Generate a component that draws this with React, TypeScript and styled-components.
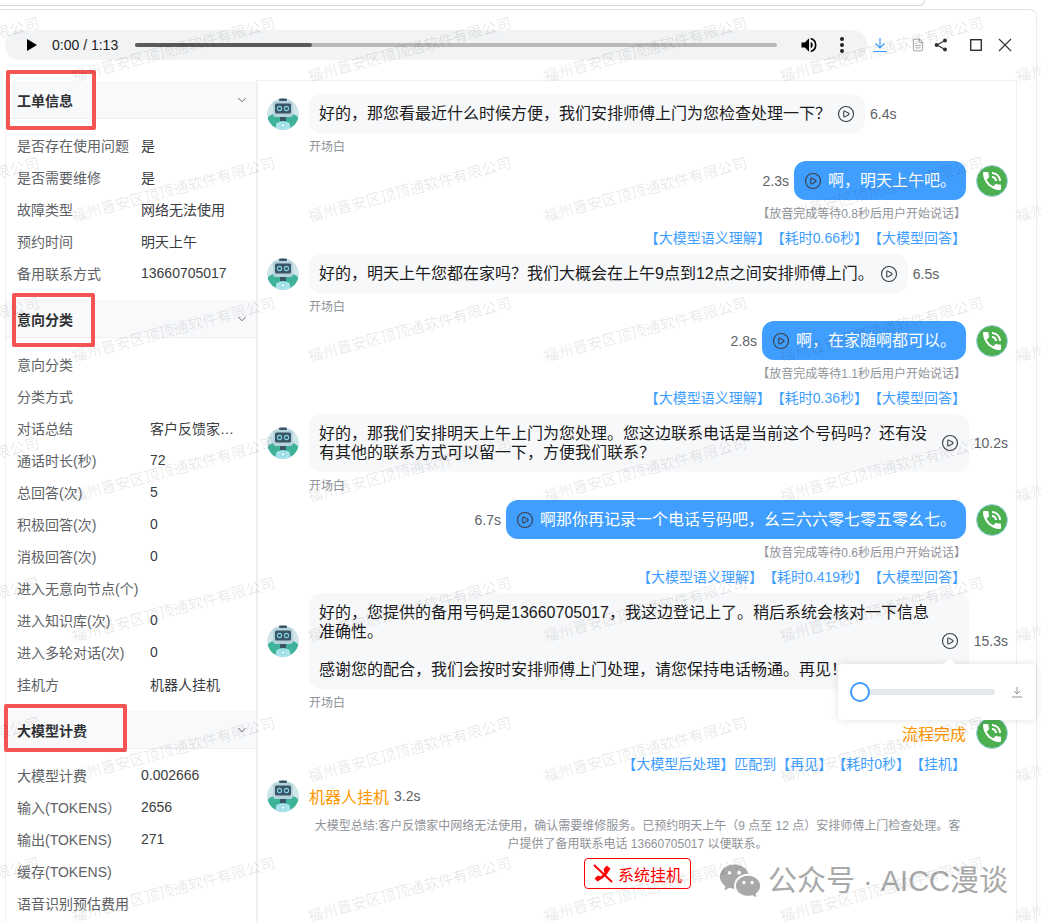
import React from "react";
import styled, { createGlobalStyle } from "styled-components";
import { ChevronDown, CirclePlay, FileText } from "lucide-react";
import { MdPhoneInTalk } from "react-icons/md";
import { RiWechatFill } from "react-icons/ri";

const GlobalStyle = createGlobalStyle`
    html, body {
        margin: 0;
        padding: 0;
        background: #fff;
    }
    body {
        font-family: "Liberation Sans", "Noto Sans CJK SC", sans-serif;
    }
    * {
        box-sizing: border-box;
    }
`;

type Field = { label: string; value?: string };

const ticketFields: Field[] = [
    { label: "是否存在使用问题", value: "是" },
    { label: "是否需要维修", value: "是" },
    { label: "故障类型", value: "网络无法使用" },
    { label: "预约时间", value: "明天上午" },
    { label: "备用联系方式", value: "13660705017" },
];

const intentFields: Field[] = [
    { label: "意向分类" },
    { label: "分类方式" },
    { label: "对话总结", value: "客户反馈家中网络无法使用" },
    { label: "通话时长(秒)", value: "72" },
    { label: "总回答(次)", value: "5" },
    { label: "积极回答(次)", value: "0" },
    { label: "消极回答(次)", value: "0" },
    { label: "进入无意向节点(个)" },
    { label: "进入知识库(次)", value: "0" },
    { label: "进入多轮对话(次)", value: "0" },
    { label: "挂机方", value: "机器人挂机" },
];

const billingFields: Field[] = [
    { label: "大模型计费", value: "0.002666" },
    { label: "输入(TOKENS）", value: "2656" },
    { label: "输出(TOKENS)", value: "271" },
    { label: "缓存(TOKENS)" },
    { label: "语音识别预估费用" },
];

const sections = [
    { title: "工单信息", labelWidth: 124, valueWidth: 100, fields: ticketFields },
    { title: "意向分类", labelWidth: 133, valueWidth: 84, fields: intentFields },
    { title: "大模型计费", labelWidth: 124, valueWidth: 100, fields: billingFields },
];

const Robot = () => (
    <AvatarBox>
        <svg width="32" height="32" viewBox="0 0 32 32">
            <circle cx="16" cy="16" r="16" fill="#cfe5ea" />
            <path d="M0.6 20 C3 16 8 15 16 15 C24 15 29 16 31.4 20 A16 16 0 0 1 0.6 20 Z" fill="#3fb39a" />
            <path d="M8 32 L9.5 25 Q16 21.5 22.5 25 L24 32 Z" fill="#a9e2ea" />
            <circle cx="16" cy="27.5" r="2" fill="#e6f8fa" stroke="#6fd0dc" strokeWidth="0.8" />
            <rect x="13" y="19" width="6" height="4" fill="#3b5566" />
            <rect x="12" y="0.5" width="8" height="2.5" rx="1" fill="#3b5566" />
            <rect x="6" y="3" width="20" height="16" rx="3" fill="#b4d2da" />
            <rect x="8" y="5.5" width="16" height="10" rx="1.5" fill="#3b5566" />
            <circle cx="12.5" cy="10.5" r="2.1" fill="none" stroke="#7fd2e0" strokeWidth="1.1" />
            <circle cx="19.5" cy="10.5" r="2.1" fill="none" stroke="#7fd2e0" strokeWidth="1.1" />
        </svg>
    </AvatarBox>
);

const Phone = () => (
    <PhoneBox>
        <MdPhoneInTalk size={24} color="#fff" />
    </PhoneBox>
);

const PlayIcon = () => (
    <PlayBox>
        <CirclePlay size={18} strokeWidth={1.5} color="#3a3f48" />
    </PlayBox>
);

const BotMessage = ({ text, time }: { text: string; time: string }) => (
    <Block>
        <Row>
            <Robot />
            <Bubble>
                <BubbleText>{text}</BubbleText>
                <PlayIcon />
            </Bubble>
            <Duration>{time}</Duration>
        </Row>
        <Caption>开场白</Caption>
    </Block>
);

const UserMessage = ({ text, time, note, links }: { text: string; time: string; note: string; links: string[] }) => (
    <Block>
        <RightRow>
            <UserDuration>{time}</UserDuration>
            <UserBubble>
                <PlayIcon />
                {text}
            </UserBubble>
            <Phone />
        </RightRow>
        <Note>{note}</Note>
        <Links>
            {links.map((link) => (
                <span key={link}>{link}</span>
            ))}
        </Links>
    </Block>
);

const App = () => {
    const marks = Array.from({ length: 42 }, (_, i) => i);

    return (
        <Page>
            <GlobalStyle />
            <TopStrip />
            <Window>
                <Toolbar>
                    <AudioBar>
                        <svg width="12" height="14" viewBox="0 0 12 14">
                            <path d="M1 1 L11 7 L1 13 Z" fill="#000" />
                        </svg>
                        <AudioTime>0:00 / 1:13</AudioTime>
                        <Track>
                            <Played />
                        </Track>
                        <svg width="20" height="20" viewBox="0 0 24 24">
                            <path d="M3 9v6h4l5 5V4L7 9H3zm13.5 3A4.5 4.5 0 0 0 14 7.97v8.05c1.48-.73 2.5-2.25 2.5-4.02z" fill="#000" />
                            <path d="M14 3.23v2.06a7 7 0 0 1 0 13.42v2.06a9 9 0 0 0 0-17.54z" fill="#000" />
                        </svg>
                        <Dots>
                            <i />
                            <i />
                            <i />
                        </Dots>
                    </AudioBar>
                    <ToolIcon $left={5}>
                        <svg width="16" height="16" viewBox="0 0 16 16">
                            <path d="M8 1 V11 M3.5 6.5 L8 11 L12.5 6.5 M1.5 14.5 H14.5" fill="none" stroke="#409eff" strokeWidth="1.2" />
                        </svg>
                    </ToolIcon>
                    <ToolIcon $left={23}>
                        <FileText size={14} strokeWidth={1} color="#606266" />
                    </ToolIcon>
                    <ToolIcon $left={9}>
                        <svg width="14" height="14" viewBox="0 0 14 14">
                            <path d="M3 7 L11 2.5 M3 7 L11 11.5" stroke="#303133" strokeWidth="1.2" />
                            <circle cx="2.6" cy="7" r="2" fill="#303133" />
                            <circle cx="11" cy="2.6" r="2" fill="#303133" />
                            <circle cx="11" cy="11.4" r="2" fill="#303133" />
                        </svg>
                    </ToolIcon>
                    <ToolIcon $left={21}>
                        <svg width="14" height="14" viewBox="0 0 14 14">
                            <rect x="1.7" y="1.7" width="10.6" height="10.6" fill="none" stroke="#303133" strokeWidth="1.4" />
                        </svg>
                    </ToolIcon>
                    <ToolIcon $left={15}>
                        <svg width="14" height="14" viewBox="0 0 14 14">
                            <path d="M1 1 L13 13 M13 1 L1 13" stroke="#303133" strokeWidth="1.1" />
                        </svg>
                    </ToolIcon>
                </Toolbar>
                <Main>
                    <Sidebar>
                        {sections.map((section) => (
                            <section key={section.title}>
                                <SectionHeader>
                                    <SectionTitle>{section.title}</SectionTitle>
                                    <ChevronDown size={14} strokeWidth={1.2} color="#303133" />
                                </SectionHeader>
                                <SectionBody>
                                    {section.fields.map((field) => (
                                        <FieldRow key={field.label} $labelWidth={section.labelWidth} $valueWidth={section.valueWidth}>
                                            <FieldLabel>{field.label}</FieldLabel>
                                            <FieldValue>{field.value}</FieldValue>
                                        </FieldRow>
                                    ))}
                                </SectionBody>
                            </section>
                        ))}
                    </Sidebar>
                    <Chat>
                        <BotMessage text="好的，那您看最近什么时候方便，我们安排师傅上门为您检查处理一下？" time="6.4s" />
                        <UserMessage
                            text="啊，明天上午吧。"
                            time="2.3s"
                            note="【放音完成等待0.8秒后用户开始说话】"
                            links={["【大模型语义理解】", "【耗时0.66秒】", "【大模型回答】"]}
                        />
                        <BotMessage text="好的，明天上午您都在家吗？我们大概会在上午9点到12点之间安排师傅上门。" time="6.5s" />
                        <UserMessage
                            text="啊，在家随啊都可以。"
                            time="2.8s"
                            note="【放音完成等待1.1秒后用户开始说话】"
                            links={["【大模型语义理解】", "【耗时0.36秒】", "【大模型回答】"]}
                        />
                        <BotMessage
                            text="好的，那我们安排明天上午上门为您处理。您这边联系电话是当前这个号码吗？还有没有其他的联系方式可以留一下，方便我们联系？"
                            time="10.2s"
                        />
                        <UserMessage
                            text="啊那你再记录一个电话号码吧，幺三六六零七零五零幺七。"
                            time="6.7s"
                            note="【放音完成等待0.6秒后用户开始说话】"
                            links={["【大模型语义理解】", "【耗时0.419秒】", "【大模型回答】"]}
                        />
                        <BotMessage
                            text={"好的，您提供的备用号码是13660705017，我这边登记上了。稍后系统会核对一下信息准确性。\n\n感谢您的配合，我们会按时安排师傅上门处理，请您保持电话畅通。再见！"}
                            time="15.3s"
                        />
                        <Block>
                            <RightRow>
                                <FlowDone>流程完成</FlowDone>
                                <Phone />
                            </RightRow>
                            <Links $top={5}>
                                <span>【大模型后处理】匹配到【再见】</span>
                                <span>【耗时0秒】</span>
                                <span>【挂机】</span>
                            </Links>
                        </Block>
                        <Block>
                            <Row>
                                <Robot />
                                <Hangup>机器人挂机</Hangup>
                                <HangupTime>3.2s</HangupTime>
                            </Row>
                            <Summary>
                                大模型总结:客户反馈家中网络无法使用，确认需要维修服务。已预约明天上午（9 点至 12 点）安排师傅上门检查处理。客户提供了备用联系电话 13660705017 以便联系。
                            </Summary>
                            <HangupButton>
                                <svg width="20" height="19" viewBox="0 0 20 19">
                                    <path d="M13.5 1.5 L17.5 4.5 L15 8.5 C13.5 11 11.5 13 8.5 15 L4.5 17.5 L1.5 14.5 L5 11.5 L7.5 12.5 C9 11.5 10.5 10 11.5 8.5 L10.5 5.5 Z" fill="#f00" />
                                    <path d="M1 1 L19 18" stroke="#f00" strokeWidth="2" />
                                </svg>
                                系统挂机
                            </HangupButton>
                        </Block>
                    </Chat>
                </Main>
            </Window>

            <Popover>
                <SliderTrack>
                    <SliderThumb />
                </SliderTrack>
                <svg width="12" height="12" viewBox="0 0 12 12">
                    <path d="M6 1 V8 M3 5 L6 8 L9 5 M1 11 H11" fill="none" stroke="#909399" strokeWidth="1" />
                </svg>
            </Popover>

            <RedBox $x={6} $y={70} $w={90} $h={60} />
            <RedBox $x={12} $y={293} $w={83} $h={54} />
            <RedBox $x={4} $y={704} $w={123} $h={48} />

            <Account>
                <RiWechatFill size={44} />
                <span>公众号&nbsp;·&nbsp;AICC漫谈</span>
            </Account>

            <Watermark>
                {marks.map((i) => (
                    <Mark key={i}>
                        <span>福州晋安区顶顶通软件有限公司</span>
                    </Mark>
                ))}
            </Watermark>
        </Page>
    );
};

export default App;

// styled-component

const Page = styled.div`
    position: relative;
    width: 1041px;
    height: 923px;
    overflow: hidden;
    background: #fff;
    color: #303133;
`;

const TopStrip = styled.div`
    width: 925px;
    height: 6px;
    border-bottom: 1px solid #d6d6d6;
    border-right: 1px solid #d6d6d6;
    border-bottom-right-radius: 6px;
`;

const Window = styled.div`
    width: 1037px;
    height: 914px;
    margin-top: 3px;
    border-top: 1px solid #e2e2e2;
    border-right: 1px solid #ececec;
    border-top-right-radius: 8px;
`;

const Toolbar = styled.div`
    display: flex;
    align-items: center;
    height: 70px;
    padding-left: 5px;
`;

const AudioBar = styled.div`
    display: flex;
    align-items: center;
    width: 862px;
    height: 30px;
    padding-left: 21px;
    background: #f1f3f4;
    border-radius: 15px;
`;

const AudioTime = styled.span`
    margin-left: 14px;
    font-size: 14px;
    color: #222;
    white-space: nowrap;
`;

const Track = styled.div`
    width: 642px;
    height: 4px;
    margin: 0 22px 0 17px;
    background: #b9b9b9;
    border-radius: 2px;
`;

const Played = styled.div`
    width: 177px;
    height: 100%;
    background: #5a5a5a;
    border-radius: 2px;
`;

const Dots = styled.div`
    display: flex;
    flex-direction: column;
    gap: 2px;
    margin-left: 21px;

    i {
        display: block;
        width: 4px;
        height: 4px;
        background: #222;
        border-radius: 50%;
    }
`;

const ToolIcon = styled.span<{ $left: number }>`
    display: flex;
    margin-left: ${(props) => props.$left}px;
`;

const Main = styled.div`
    display: flex;
    height: 844px;
    margin-left: 5px;
`;

const Sidebar = styled.aside`
    width: 253px;
    flex-shrink: 0;
    padding-top: 1px;
    border-left: 1px solid #eef0f3;
    border-right: 2px solid #eef0f3;
`;

const SectionHeader = styled.div`
    display: flex;
    align-items: center;
    justify-content: space-between;
    height: 38px;
    padding: 0 7px 0 11px;
    background: #f8f9fb;
    border-bottom: 1px solid #eef0f3;
`;

const SectionTitle = styled.h3`
    margin: 0;
    font-size: 14px;
    font-weight: 700;
    color: #303133;
`;

const SectionBody = styled.div`
    padding: 10px 0 11px 11px;
`;

const FieldRow = styled.div<{ $labelWidth: number; $valueWidth: number }>`
    display: grid;
    grid-template-columns: ${(props) => props.$labelWidth}px ${(props) => props.$valueWidth}px;
    align-items: center;
    height: 32px;
    font-size: 14px;
`;

const FieldLabel = styled.span`
    color: #606266;
    white-space: nowrap;
`;

const FieldValue = styled.span`
    color: #3a3d42;
    white-space: nowrap;
    overflow: hidden;
    text-overflow: ellipsis;
`;

const Chat = styled.div`
    display: flex;
    flex-direction: column;
    gap: 7px;
    width: 759px;
    padding: 13px 8px 0 9px;
    border-top: 1px solid #eef0f3;
    border-right: 1px solid #eef0f3;
`;

const Block = styled.div``;

const Row = styled.div`
    display: flex;
    align-items: center;
`;

const RightRow = styled(Row)`
    justify-content: flex-end;
`;

const AvatarBox = styled.div`
    width: 32px;
    height: 32px;
    flex-shrink: 0;
    margin-right: 10px;
    border-radius: 50%;
    overflow: hidden;
`;

const PhoneBox = styled.div`
    display: flex;
    align-items: center;
    justify-content: center;
    width: 32px;
    height: 32px;
    flex-shrink: 0;
    margin-left: 10px;
    background: #4caf50;
    border: 1px solid #a6d5e8;
    border-radius: 50%;
`;

const Bubble = styled.div`
    display: flex;
    align-items: center;
    gap: 6px;
    padding: 10px;
    background: #f7f8fa;
    border-radius: 12px;
    font-size: 16px;
    line-height: 19px;
    color: #1b1b1b;
`;

const BubbleText = styled.div`
    max-width: 616px;
    white-space: pre-line;
`;

const PlayBox = styled.span`
    display: flex;
    flex-shrink: 0;
`;

const Duration = styled.span`
    margin-left: 5px;
    font-size: 14px;
    color: #606266;
    white-space: nowrap;
`;

const UserDuration = styled(Duration)`
    margin: 0 5px 0 0;
`;

const UserBubble = styled.div`
    display: flex;
    align-items: center;
    gap: 6px;
    padding: 10px;
    background: #409eff;
    border-radius: 12px;
    font-size: 16px;
    line-height: 19px;
    color: #fff;
`;

const Caption = styled.div`
    margin: 7px 0 0 42px;
    font-size: 12px;
    line-height: 14px;
    color: #909399;
`;

const Note = styled.div`
    margin: 7px 42px 0 0;
    font-size: 12px;
    line-height: 14px;
    text-align: right;
    color: #909399;
`;

const Links = styled.div<{ $top?: number }>`
    display: flex;
    justify-content: flex-end;
    margin: ${(props) => props.$top ?? 7}px 42px -1px 0;
    font-size: 14px;
    line-height: 20px;
    color: #409eff;
`;

const FlowDone = styled.span`
    font-size: 16px;
    color: #ff9800;
`;

const Hangup = styled.span`
    font-size: 16px;
    color: #ff9800;
`;

const HangupTime = styled(Duration)``;

const Summary = styled.p`
    margin: 5px 42px 0;
    font-size: 12px;
    line-height: 18px;
    text-align: center;
    color: #909399;
`;

const HangupButton = styled.div`
    display: flex;
    align-items: center;
    justify-content: center;
    gap: 5px;
    width: 107px;
    height: 31px;
    margin: 5px 0 0 317px;
    border: 1px solid #f00;
    border-radius: 4px;
    font-size: 16px;
    color: #f00;
`;

const Popover = styled.div`
    position: absolute;
    left: 838px;
    top: 664px;
    display: flex;
    align-items: center;
    gap: 16px;
    width: 198px;
    height: 56px;
    padding: 0 13px 0 21px;
    background: #fff;
    border-radius: 4px;
    box-shadow: 0 0 8px rgba(0, 0, 0, 0.12);

    &::before {
        content: "";
        position: absolute;
        left: 107px;
        top: -4px;
        width: 9px;
        height: 9px;
        background: #fff;
        transform: rotate(45deg);
    }
`;

const SliderTrack = styled.div`
    position: relative;
    flex: 1;
    height: 6px;
    background: #e4e7ed;
    border-radius: 3px;
`;

const SliderThumb = styled.div`
    position: absolute;
    left: -9px;
    top: -7px;
    width: 20px;
    height: 20px;
    background: #fff;
    border: 2px solid #409eff;
    border-radius: 50%;
`;

const RedBox = styled.div<{ $x: number; $y: number; $w: number; $h: number }>`
    position: absolute;
    left: ${(props) => props.$x}px;
    top: ${(props) => props.$y}px;
    width: ${(props) => props.$w}px;
    height: ${(props) => props.$h}px;
    border: 4px solid #f55454;
    border-radius: 2px;
`;

const Account = styled.div`
    position: absolute;
    left: 718px;
    top: 859px;
    display: flex;
    align-items: center;
    gap: 6px;
    font-size: 29px;
    line-height: 44px;
    color: #a9a9a9;
    white-space: nowrap;
`;

const Watermark = styled.div`
    position: absolute;
    left: -162px;
    top: 84px;
    display: grid;
    grid-template-columns: repeat(6, 236px);
    grid-auto-rows: 140px;
    pointer-events: none;
`;

const Mark = styled.div`
    height: 140px;

    span {
        display: block;
        width: 220px;
        font-size: 15px;
        line-height: 15px;
        margin-top: -15px;
        color: rgba(0, 0, 0, 0.1);
        white-space: nowrap;
        transform: rotate(-15deg);
        transform-origin: 0 100%;
    }
`;
